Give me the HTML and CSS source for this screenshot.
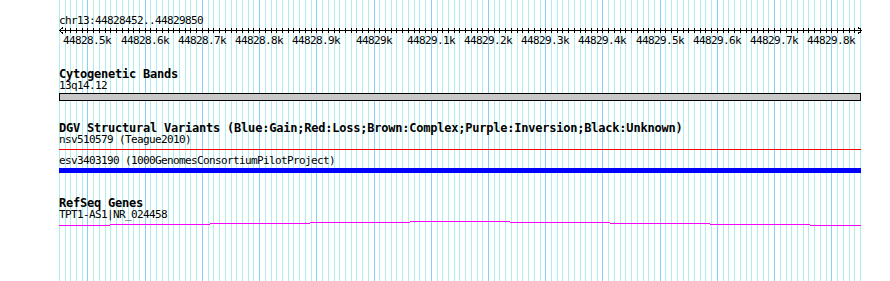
FILE: index.html
```html
<!DOCTYPE html>
<html lang="en">
<head>
    <meta charset="UTF-8">
    <title>chr13:44828452..44829850</title>
    <link rel="stylesheet" href="styles.css">
</head>
<body>
    <div class="panel">
        <svg class="grid" id="grid" width="890" height="281"></svg>

        <div class="tracks">
            <section class="track ruler">
                <div class="label">chr13:44828452..44829850</div>
                <svg class="scale" id="scale" width="804" height="19">
                    <path class="axis" d="M0.5 3.5 H802.5 M4 0.5 L0.5 3.5 L4 6.5 M799 0.5 L802.5 3.5 L799 6.5"/>
                </svg>
            </section>

            <section class="track cyto">
                <h2 class="title">Cytogenetic Bands</h2>
                <div class="label">13q14.12</div>
                <div class="band"></div>
            </section>

            <section class="track dgv">
                <h2 class="title">DGV Structural Variants (Blue:Gain;Red:Loss;Brown:Complex;Purple:Inversion;Black:Unknown)</h2>
                <div class="label">nsv510579 (Teague2010)</div>
                <div class="sv loss"></div>
                <div class="label">esv3403190 (1000GenomesConsortiumPilotProject)</div>
                <div class="sv gain"></div>
            </section>

            <section class="track refseq">
                <h2 class="title">RefSeq Genes</h2>
                <div class="label">TPT1-AS1|NR_024458</div>
                <svg class="gene" width="803" height="5">
                    <path d="M0 4.5 H51 M51 3.5 H151 M151 2.5 H251 M251 1.5 H351 M351 0.5 H451 M451 1.5 H551 M551 2.5 H651 M651 3.5 H751 M751 4.5 H802"/>
                </svg>
            </section>
        </div>
    </div>

    <script>
        const start = 44828452;
        const end = 44829850;
        const ns = 'http://www.w3.org/2000/svg';
        const toX = bp => Math.round(60 + (bp - start) * 800 / (end - start));

        const grid = document.getElementById('grid');
        const scale = document.getElementById('scale');

        for (let bp = 44828450; bp <= end; bp += 10) {
            const x = toX(bp);
            const major = bp % 100 === 0;

            const line = document.createElementNS(ns, 'line');
            line.setAttribute('x1', x + 0.5);
            line.setAttribute('x2', x + 0.5);
            line.setAttribute('y1', 0);
            line.setAttribute('y2', 281);
            line.setAttribute('class', major ? 'major' : 'minor');
            grid.appendChild(line);

            const sx = x - 59;
            if (sx > 1 && sx < 802) {
                const tick = document.createElementNS(ns, 'line');
                tick.setAttribute('x1', sx + 0.5);
                tick.setAttribute('x2', sx + 0.5);
                tick.setAttribute('y1', 1);
                tick.setAttribute('y2', 6);
                tick.setAttribute('class', 'tick');
                scale.appendChild(tick);
            }

            if (major) {
                const label = (bp / 1000).toFixed(1).replace(/\.0$/, '') + 'k';
                const text = document.createElementNS(ns, 'text');
                text.setAttribute('x', sx - label.length * 3);
                text.setAttribute('y', 17);
                text.textContent = label;
                scale.appendChild(text);
            }
        }
    </script>
</body>
</html>
```

FILE: styles.css
```css
* {
    box-sizing: border-box;
    margin: 0;
    padding: 0;
}

body {
    background-color: #fff;
    color: #000;
    font-family: 'DejaVu Sans Mono', 'Liberation Mono', monospace;
}

.panel {
    position: relative;
    width: 890px;
    height: 281px;
    overflow: hidden;
}

.grid {
    position: absolute;
    left: 0;
    top: 0;
    shape-rendering: crispEdges;
}

.grid .minor {
    stroke: #afeeee;
    stroke-width: 1;
}

.grid .major {
    stroke: #87cefa;
    stroke-width: 1;
}

.tracks {
    position: relative;
    padding: 15px 0 0 59px;
}

.label {
    font-size: 11px;
    line-height: 12px;
    height: 12px;
    letter-spacing: -0.62px;
    white-space: nowrap;
}

.title {
    font-size: 12px;
    font-weight: bold;
    line-height: 12px;
    height: 12px;
    letter-spacing: -0.22px;
    white-space: nowrap;
}

.scale {
    display: block;
    overflow: visible;
}

.scale .axis,
.scale .tick {
    stroke: #000;
    stroke-width: 1;
    fill: none;
    shape-rendering: crispEdges;
}

.scale text {
    font-family: 'DejaVu Sans Mono', 'Liberation Mono', monospace;
    font-size: 11px;
    letter-spacing: -0.62px;
    fill: #000;
}

.cyto {
    margin-top: 22px;
}

.band {
    width: 802px;
    height: 8px;
    margin-top: 1px;
    border: 1px solid #000;
    background-color: #c8c8c8;
}

.dgv {
    margin-top: 21px;
}

.sv {
    width: 802px;
}

.sv.loss {
    height: 1px;
    margin: 3px 0 5px;
    background-color: #f00;
}

.sv.gain {
    height: 5px;
    margin-top: 1px;
    background-color: #00f;
}

.refseq {
    margin-top: 24px;
}

.gene {
    display: block;
}

.gene path {
    stroke: #f0f;
    stroke-width: 1;
    fill: none;
    shape-rendering: crispEdges;
}
```
